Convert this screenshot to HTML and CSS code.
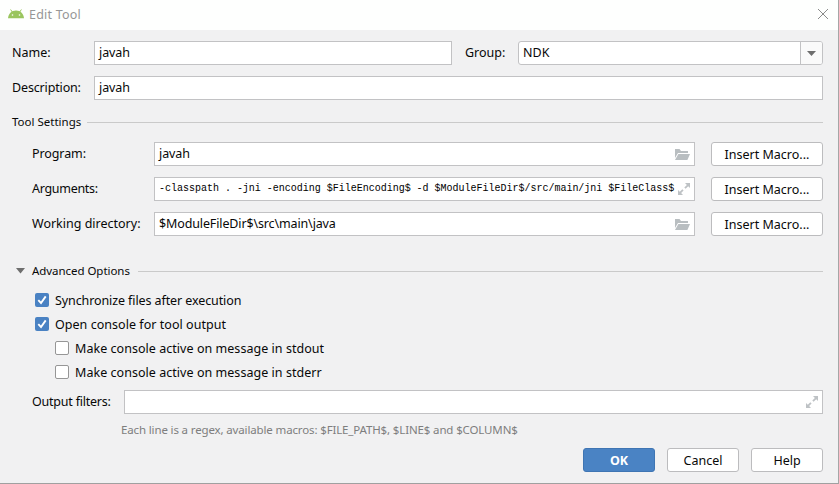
FILE: index.html
```html
<!DOCTYPE html>
<html lang="en">
<head>
<meta charset="utf-8">
<title>Edit Tool</title>
<link rel="stylesheet" href="styles.css">
</head>
<body>
<svg width="0" height="0" class="defs">
  <symbol id="folder" viewBox="0 0 16 14"><path d="M1 2h4.500l1.500 2h7v2H4L1 11z"/><path d="M4.400 7H16l-2.600 6H1z"/></symbol>
  <symbol id="expand" viewBox="0 0 12 12"><path d="M7 0h5v5l-1.800-1.800-2.600 2.600-1.300-1.300 2.600-2.600zM0 7l1.800 1.800 2.500-2.500 1.300 1.300-2.500 2.500L5 12H0z"/></symbol>
</svg>
<div class="dialog">
  <header class="titlebar">
    <svg class="android" width="16" height="10" viewBox="0 0 16 10"><path d="M2.600.5 4.500 3.300M13.400.5 11.500 3.300" stroke="#9ac55e" stroke-width="1"/><path d="M0 9.300C.3 4.900 3.400 1.500 8 1.500s7.700 3.400 8 7.800z" fill="#9ac55e"/><circle cx="4.500" cy="6" r=".8" fill="#fff"/><circle cx="11.500" cy="6" r=".8" fill="#fff"/></svg>
    <span class="title">Edit Tool</span>
    <svg class="close" width="10" height="10" viewBox="0 0 10 10"><path d="M0 0l10 10M10 0L0 10" stroke="#8b8b8b"/></svg>
  </header>
  <main class="body">
    <div class="row">
      <label class="w82"><span>Name:</span></label>
      <div class="field name"><span class="t-javah">javah</span></div>
      <label class="group"><span>Group:</span></label>
      <div class="field combo"><span>NDK</span><i class="drop"><svg width="9" height="5" viewBox="0 0 9 5"><path d="M0 0h9L4.500 5z" fill="#6e6e6e"/></svg></i></div>
    </div>
    <div class="row">
      <label class="w82"><span class="t-desc">Description:</span></label>
      <div class="field grow"><span class="t-javah">javah</span></div>
    </div>
    <div class="section"><span class="t-tool">Tool Settings</span><hr></div>
    <div class="row in">
      <label class="w122"><span class="t-prog">Program:</span></label>
      <div class="field grow"><span class="t-javah">javah</span><svg class="folder"><use href="#folder"/></svg></div>
      <button class="macro"><span>Insert Macro...</span></button>
    </div>
    <div class="row in">
      <label class="w122"><span class="t-args">Arguments:</span></label>
      <div class="field grow"><span class="mono">-classpath . -jni -encoding $FileEncoding$ -d $ModuleFileDir$/src/main/jni $FileClass$</span><svg class="expand"><use href="#expand"/></svg></div>
      <button class="macro"><span>Insert Macro...</span></button>
    </div>
    <div class="row in">
      <label class="w122"><span>Working directory:</span></label>
      <div class="field grow"><span class="t-path">$ModuleFileDir$\src\main\java</span><svg class="folder"><use href="#folder"/></svg></div>
      <button class="macro"><span>Insert Macro...</span></button>
    </div>
    <div class="section advanced"><svg class="arrow" width="9" height="6" viewBox="0 0 9 6"><path d="M0 0h9L4.500 5.500z" fill="#6e6e6e"/></svg><span class="t-adv">Advanced Options</span><hr></div>
    <div class="checks">
      <div class="check"><i class="box on"><svg width="14" height="14" viewBox="0 0 14 14"><path d="M3.300 7.200 6 10l4.700-6.600" fill="none" stroke="#fff" stroke-width="1.900"/></svg></i><span class="t-sync">Synchronize files after execution</span></div>
      <div class="check"><i class="box on"><svg width="14" height="14" viewBox="0 0 14 14"><path d="M3.300 7.200 6 10l4.700-6.600" fill="none" stroke="#fff" stroke-width="1.900"/></svg></i><span class="t-open">Open console for tool output</span></div>
      <div class="check sub"><i class="box"></i><span class="t-open">Make console active on message in stdout</span></div>
      <div class="check sub"><i class="box"></i><span class="t-open">Make console active on message in stderr</span></div>
    </div>
    <div class="row in filters">
      <label class="w92"><span class="t-filt">Output filters:</span></label>
      <div class="field grow"><svg class="expand"><use href="#expand"/></svg></div>
    </div>
    <div class="hint"><span>Each line is a regex, available macros: $FILE_PATH$, $LINE$ and $COLUMN$</span></div>
    <footer class="actions">
      <button class="primary"><span>OK</span></button>
      <button><span>Cancel</span></button>
      <button><span>Help</span></button>
    </footer>
  </main>
</div>
</body>
</html>
```
FILE: styles.css
```css
* { box-sizing: border-box; }
body { margin: 0; background: #f1f1f2; color: #080808; font: 12.5px/18px "Noto Sans", "Open Sans", sans-serif; }
.defs { position: absolute; }
.dialog { width: 839px; height: 484px; border-right: 1px solid #a6a6a6; border-bottom: 1px solid #a0a0a0; overflow: hidden; }
span { white-space: nowrap; }
.titlebar { height: 30px; background: #fefffe; display: flex; align-items: center; padding: 0 10px 2px 8px; color: #969696; }
.title { margin-left: 5px; padding-top: 2px; letter-spacing: .2px; }
.close { margin-left: auto; }
.body { padding: 11px 15px 0 12px; }
.row { display: flex; height: 24px; margin-bottom: 11px; align-items: center; }
.in { padding-left: 20px; }
label { flex: none; }
.w82 { width: 82px; } .w122 { width: 122px; } .w92 { width: 92px; }
.group { width: 66px; padding-left: 13px; }
.field { height: 24px; border: 1px solid #c2c2c4; background: #fff; display: flex; align-items: center; padding: 0 4px; min-width: 0; }
.grow { flex: 1; }
.name { width: 358px; }
.combo { flex: 1; border-radius: 3px; padding-right: 0; }
.drop { margin-left: auto; width: 22px; height: 22px; border-left: 1px solid #c2c2c4; background: #fafafa; display: flex; align-items: center; justify-content: center; border-radius: 0 2px 2px 0; }
.folder { margin-left: auto; width: 16px; height: 14px; fill: #b9bec1; flex: none; }
.expand { margin-left: auto; width: 12px; height: 12px; fill: #bec2c5; flex: none; }
.mono { font: 10px/14px "Liberation Mono", monospace; color: #000; letter-spacing: -.01px; }
button { height: 24px; width: 72px; padding: 1px 0 0; border: 1px solid #bcbcbe; border-radius: 3px; background: #fff; font: inherit; color: #080808; }
.macro { width: 112px; margin-left: 16px; }
.t-javah { letter-spacing: -.1px; }
.t-desc { letter-spacing: -.15px; }
.t-tool, .t-adv { font-size: 11.5px; }
.t-adv { letter-spacing: -.05px; }
.t-prog { letter-spacing: -.1px; }
.t-args { letter-spacing: -.3px; }
.t-path { letter-spacing: -.13px; }
.t-sync { letter-spacing: -.1px; }
.t-open { letter-spacing: .04px; }
.t-filt { letter-spacing: -.22px; }
.section { display: flex; align-items: center; height: 20px; margin-top: 12px; }
.section hr { flex: 1; border: 0; border-top: 1px solid #cacaca; margin: 0 0 0 6px; }
.section + .row { margin-top: 10px; }
.advanced { margin-top: 25px; padding-left: 4px; }
.advanced hr { margin-left: 8px; }
.arrow { margin-right: 7px; }
.checks { margin: 7px 0 0 23px; }
.check { height: 24px; display: flex; align-items: center; }
.check span { padding-top: 1px; }
.sub { padding-left: 20px; }
.box { width: 14px; height: 14px; border: 1px solid #969696; border-radius: 2px; background: #fff; margin-right: 6px; }
.on { border: 0; background: #4a82c3; display: flex; }
.filters { margin: 6px 0 0; }
.hint { height: 18px; margin-top: 7px; padding-left: 109px; color: #7e7e7e; font-size: 11.5px; letter-spacing: -.14px; }
.actions { display: flex; justify-content: flex-end; gap: 12px; margin-top: 9px; }
.primary { background: #4a83c4; border-color: #3f75b3; color: #fff; font-weight: bold; }
```
